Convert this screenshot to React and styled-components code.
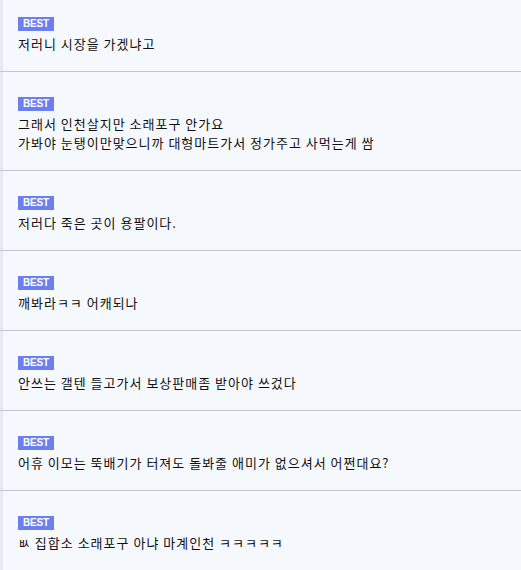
import React from "react";
import styled, { createGlobalStyle } from "styled-components";

const Global = createGlobalStyle`
  html, body {
    margin: 0;
    padding: 0;
    background: #f5f8fd;
  }
  body {
    font-family: "Noto Sans CJK KR", "Noto Sans", sans-serif;
    overflow: hidden;
  }
`;

const Page = styled.div`
  width: 521px;
  height: 570px;
  overflow: hidden;
  background: linear-gradient(to right, #e6e9f2 0, #e6e9f2 3px, #f5f8fd 3px);
`;

const List = styled.ul`
  list-style: none;
  margin: -8px 0 0;
  padding: 0;
`;

const Item = styled.li`
  display: flex;
  flex-direction: column;
  align-items: flex-start;
  padding: 25px 18px 18px;
  border-bottom: 1px solid #c4c7cf;
`;

const Badge = styled.span`
  display: flex;
  align-items: center;
  height: 14px;
  padding: 0 5px;
  background: #6b80ee;
  color: #ffffff;
  font-family: "Liberation Sans", Arial, sans-serif;
  font-weight: 700;
  font-size: 10px;
  line-height: 14px;
  letter-spacing: -0.2px;
`;

const Text = styled.p`
  margin: 3px 0 0;
  font-size: 13px;
  line-height: 19px;
  letter-spacing: 1px;
  color: #111111;
`;

const comments = [
  ["저러니 시장을 가겠냐고"],
  ["그래서 인천살지만 소래포구 안가요", "가봐야 눈탱이만맞으니까 대형마트가서 정가주고 사먹는게 쌈"],
  ["저러다 죽은 곳이 용팔이다."],
  ["깨봐라ㅋㅋ 어캐되나"],
  ["안쓰는 갤텐 들고가서 보상판매좀 받아야 쓰겄다"],
  ["어휴 이모는 뚝배기가 터져도 돌봐줄 애미가 없으셔서 어쩐대요?"],
  ["ㅄ 집합소 소래포구 아냐 마계인천 ㅋㅋㅋㅋㅋ"],
];

export default function App() {
  return (
    <Page>
      <Global />
      <List>
        {comments.map((lines, i) => (
          <Item key={i}>
            <Badge>BEST</Badge>
            <Text>
              {lines.map((l, j) => (
                <React.Fragment key={j}>
                  {j > 0 && <br />}
                  {l}
                </React.Fragment>
              ))}
            </Text>
          </Item>
        ))}
      </List>
    </Page>
  );
}
